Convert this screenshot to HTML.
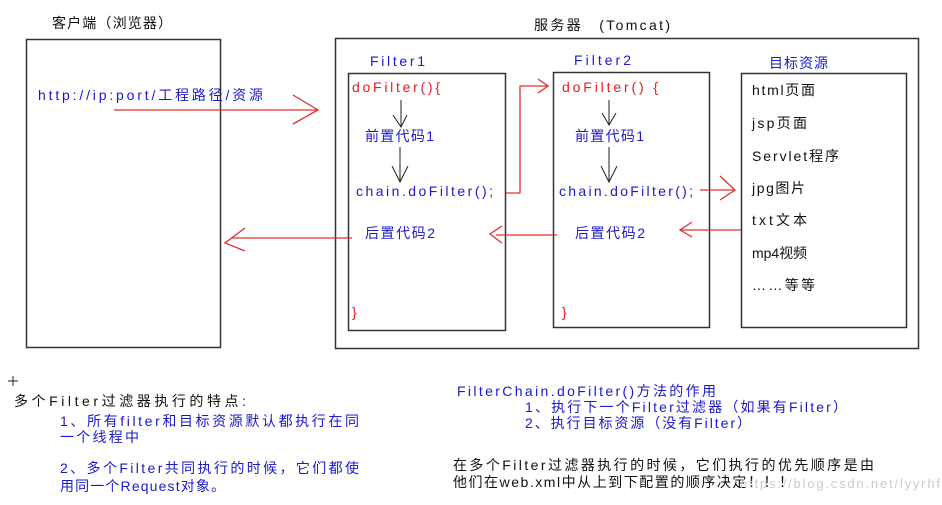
<!DOCTYPE html>
<html><head><meta charset="utf-8"><style>
body{margin:0;background:#fff;width:942px;height:500px;overflow:hidden}
svg text{font-family:"Liberation Sans","Noto Sans CJK SC",sans-serif;font-size:14px}
.b{fill:#1a1acc}.r{fill:#e02020}.k{fill:#111}
</style></head><body>
<svg width="942" height="500" xmlns="http://www.w3.org/2000/svg">
<g fill="none" stroke="#333" stroke-width="1.5">
<rect x="26.5" y="39.5" width="194" height="308"/>
<rect x="335.5" y="38.5" width="583" height="310"/>
<rect x="348.5" y="73.5" width="157" height="257"/>
<rect x="553.5" y="72.5" width="156" height="255"/>
<rect x="741.5" y="73.5" width="165" height="254"/>
</g>
<g stroke="#222" stroke-width="1" fill="none">
<path d="M401 100V127M393 115l8 12 6-12M400 147V182M392 166l8 16 8-16"/>
<path d="M609 100V125M602 113l7 12 7-12M609 147V182M601 166l8 16 8-16"/>
<path d="M8 381h10M13 376v10"/>
</g>
<g stroke="#e03030" stroke-width="1.3" fill="none">
<path d="M114 110H318M293 95l25 15-25 14"/>
<path d="M506 193H520V86H548M538 79l10 7-10 7"/>
<path d="M700 190H734M720 176l15 14-15 10"/>
<path d="M741 230H680M692 222l-12 8 12 7"/>
<path d="M557 235H496M502 226l-12 8 12 9"/>
<path d="M352 238H232M245 228l-20 15 20 8"/>
</g>
<text x="52" y="28" class="k" textLength="120" lengthAdjust="spacing">客户端（浏览器）</text>
<text x="534" y="30" class="k" textLength="136" lengthAdjust="spacing">服务器　(Tomcat)</text>
<text x="370" y="66" class="b" textLength="55" lengthAdjust="spacing">Filter1</text>
<text x="574" y="65" class="b" textLength="57" lengthAdjust="spacing">Filter2</text>
<text x="769" y="68" class="b" textLength="59" lengthAdjust="spacing">目标资源</text>
<text x="38" y="100" class="b" textLength="225" lengthAdjust="spacing">http://ip:port/工程路径/资源</text>
<text x="352" y="92" class="r" textLength="88" lengthAdjust="spacing">doFilter(){</text>
<text x="365" y="141" class="b" textLength="69" lengthAdjust="spacing">前置代码1</text>
<text x="356" y="196" class="b" textLength="137" lengthAdjust="spacing">chain.doFilter();</text>
<text x="365" y="238" class="b" textLength="70" lengthAdjust="spacing">后置代码2</text>
<text x="352" y="317" class="r">}</text>
<text x="562" y="92" class="r" textLength="96" lengthAdjust="spacing">doFilter() {</text>
<text x="575" y="141" class="b" textLength="69" lengthAdjust="spacing">前置代码1</text>
<text x="559" y="196" class="b" textLength="134" lengthAdjust="spacing">chain.doFilter();</text>
<text x="575" y="238" class="b" textLength="70" lengthAdjust="spacing">后置代码2</text>
<text x="562" y="317" class="r">}</text>
<g class="k">
<text x="752" y="95" textLength="63" lengthAdjust="spacing">html页面</text>
<text x="752" y="128" textLength="55" lengthAdjust="spacing">jsp页面</text>
<text x="752" y="161" textLength="87" lengthAdjust="spacing">Servlet程序</text>
<text x="752" y="193" textLength="53" lengthAdjust="spacing">jpg图片</text>
<text x="752" y="225" textLength="55" lengthAdjust="spacing">txt文本</text>
<text x="752" y="258" textLength="55" lengthAdjust="spacing">mp4视频</text>
<text x="752" y="290" textLength="63" lengthAdjust="spacing">……等等</text>
</g>
<text x="14" y="406" class="k" textLength="232" lengthAdjust="spacing">多个Filter过滤器执行的特点:</text>
<text x="60" y="426" class="b" textLength="299" lengthAdjust="spacing">1、所有filter和目标资源默认都执行在同</text>
<text x="60" y="442" class="b" textLength="79" lengthAdjust="spacing">一个线程中</text>
<text x="60" y="473" class="b" textLength="299" lengthAdjust="spacing">2、多个Filter共同执行的时候，它们都使</text>
<text x="60" y="491" class="b" textLength="165" lengthAdjust="spacing">用同一个Request对象。</text>
<text x="457" y="396" class="b" textLength="259" lengthAdjust="spacing">FilterChain.doFilter()方法的作用</text>
<text x="525" y="412" class="b" textLength="322" lengthAdjust="spacing">1、执行下一个Filter过滤器（如果有Filter）</text>
<text x="525" y="428" class="b" textLength="226" lengthAdjust="spacing">2、执行目标资源（没有Filter）</text>
<text x="453" y="470" class="k" textLength="421" lengthAdjust="spacing">在多个Filter过滤器执行的时候，它们执行的优先顺序是由</text>
<text x="453" y="487" class="k" textLength="340" lengthAdjust="spacing">他们在web.xml中从上到下配置的顺序决定！！！</text>
<text x="740" y="488" fill="#ccc" style="font-size:13px" textLength="200" lengthAdjust="spacing">https://blog.csdn.net/lyyrhf</text>
</svg>
</body></html>
